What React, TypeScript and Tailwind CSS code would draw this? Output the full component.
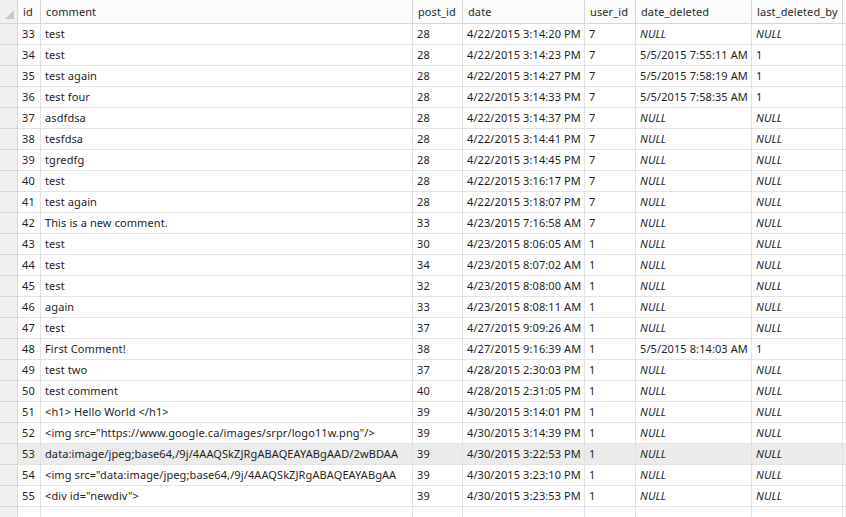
import React from "react";

type Row = [string, string, string, string, string, string | null, string | null];

const rows: Row[] = [
  ["33", "test", "28", "4/22/2015 3:14:20 PM", "7", null, null],
  ["34", "test", "28", "4/22/2015 3:14:23 PM", "7", "5/5/2015 7:55:11 AM", "1"],
  ["35", "test again", "28", "4/22/2015 3:14:27 PM", "7", "5/5/2015 7:58:19 AM", "1"],
  ["36", "test four", "28", "4/22/2015 3:14:33 PM", "7", "5/5/2015 7:58:35 AM", "1"],
  ["37", "asdfdsa", "28", "4/22/2015 3:14:37 PM", "7", null, null],
  ["38", "tesfdsa", "28", "4/22/2015 3:14:41 PM", "7", null, null],
  ["39", "tgredfg", "28", "4/22/2015 3:14:45 PM", "7", null, null],
  ["40", "test", "28", "4/22/2015 3:16:17 PM", "7", null, null],
  ["41", "test again", "28", "4/22/2015 3:18:07 PM", "7", null, null],
  ["42", "This is a new comment.", "33", "4/23/2015 7:16:58 AM", "7", null, null],
  ["43", "test", "30", "4/23/2015 8:06:05 AM", "1", null, null],
  ["44", "test", "34", "4/23/2015 8:07:02 AM", "1", null, null],
  ["45", "test", "32", "4/23/2015 8:08:00 AM", "1", null, null],
  ["46", "again", "33", "4/23/2015 8:08:11 AM", "1", null, null],
  ["47", "test", "37", "4/27/2015 9:09:26 AM", "1", null, null],
  ["48", "First Comment!", "38", "4/27/2015 9:16:39 AM", "1", "5/5/2015 8:14:03 AM", "1"],
  ["49", "test two", "37", "4/28/2015 2:30:03 PM", "1", null, null],
  ["50", "test comment", "40", "4/28/2015 2:31:05 PM", "1", null, null],
  ["51", "<h1> Hello World </h1>", "39", "4/30/2015 3:14:01 PM", "1", null, null],
  ["52", "<img src=\"https://www.google.ca/images/srpr/logo11w.png\"/>", "39", "4/30/2015 3:14:39 PM", "1", null, null],
  ["53", "data:image/jpeg;base64,/9j/4AAQSkZJRgABAQEAYABgAAD/2wBDAA", "39", "4/30/2015 3:22:53 PM", "1", null, null],
  ["54", "<img src=\"data:image/jpeg;base64,/9j/4AAQSkZJRgABAQEAYABgAA", "39", "4/30/2015 3:23:10 PM", "1", null, null],
  ["55", "<div id=\"newdiv\">", "39", "4/30/2015 3:23:53 PM", "1", null, null],
];

const cols = "grid grid-cols-[18px_23px_372px_50px_122px_51px_116px_91px_1fr]";
const cell = "border-r border-b border-[#e3e3e3] pl-[4px] whitespace-nowrap overflow-hidden leading-[20px] h-[21px]";

function Cell({ children, italic }: { children?: React.ReactNode; italic?: boolean }) {
  return <div className={`${cell} ${italic ? "italic" : ""}`}>{children}</div>;
}

export default function App() {
  return (
    <div
      className="w-[846px] h-[517px] overflow-hidden bg-white text-[11px] tracking-[0.1px] text-[#1e1e1e]"
      style={{ fontFamily: '"Noto Sans", "Open Sans", Arial, sans-serif' }}
    >
      <div className={`${cols} h-[24px] bg-[#fbfbfb] text-[#2a2a2a]`}>
        <div className="relative border-r border-b border-[#d6d6d6] bg-[#f0f0f0]">
          <svg className="absolute left-[5px] top-[10px]" width="9" height="9" viewBox="0 0 9 9">
            <polygon points="9,0 9,9 0,9" fill="#c8c8c8" />
          </svg>
        </div>
        {["id", "comment", "post_id", "date", "user_id", "date_deleted", "last_deleted_by"].map((h) => (
          <div key={h} className="border-r border-b border-[#d6d6d6] pl-[5px] leading-[23px] whitespace-nowrap overflow-hidden">
            {h}
          </div>
        ))}
        <div className="border-b border-[#d6d6d6]" />
      </div>
      {rows.map((r) => {
        const sel = r[0] === "53";
        return (
          <div key={r[0]} className={`${cols} ${sel ? "bg-[#ebebeb]" : ""}`}>
            <div className="border-r border-b border-[#d6d6d6] bg-[#f0f0f0] h-[21px]" />
            <Cell>{r[0]}</Cell>
            <Cell>{r[1]}</Cell>
            <Cell>{r[2]}</Cell>
            <Cell>{r[3]}</Cell>
            <Cell>{r[4]}</Cell>
            <Cell italic={r[5] === null}>{r[5] ?? "NULL"}</Cell>
            <Cell italic={r[6] === null}>{r[6] ?? "NULL"}</Cell>
            <div className="border-b border-[#e3e3e3] h-[21px]" />
          </div>
        );
      })}
      <div className={cols}>
        <div className="border-r border-[#d6d6d6] bg-[#f0f0f0] h-[21px]" />
        <Cell />
        <Cell />
        <Cell />
        <Cell />
        <Cell />
        <Cell />
        <Cell />
        <div />
      </div>
    </div>
  );
}
